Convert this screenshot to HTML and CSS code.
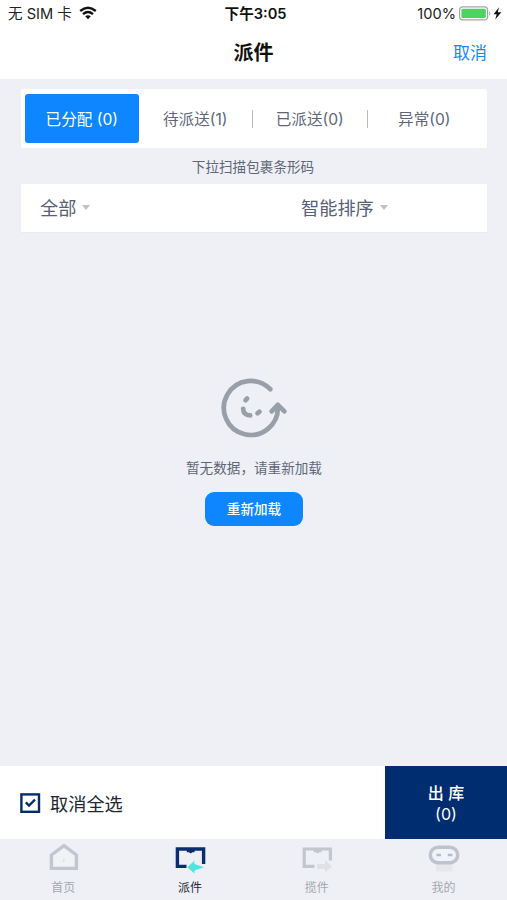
FILE: index.html
```
<!DOCTYPE html>
<html lang="zh-CN">
<head>
    <meta charset="UTF-8">
    <meta name="viewport" content="width=device-width, initial-scale=1.0">
    <title>派件</title>
    <link rel="stylesheet" href="styles.css">
</head>
<body>
<div class="page">
    <div class="status">
        <div class="status-left">
            <span>无 SIM 卡</span>
            <svg class="wifi" width="18" height="14" viewBox="0 0 18 14">
                <path d="M1.2 5Q9 -1.6 16.8 5M4 8.2Q9 4 14 8.2" fill="none" stroke="#111" stroke-width="2.4"/>
                <path d="M6.2 10.3Q9 8 11.8 10.3L9 13.2Z" fill="#111"/>
            </svg>
        </div>
        <div class="status-time">下午3:05</div>
        <div class="status-right">
            <span>100%</span>
            <svg width="44" height="16" viewBox="0 0 44 16">
                <rect x="0.6" y="0.9" width="28" height="13" rx="3.2" fill="#fff" stroke="#a6a6a6" stroke-width="1.2"/>
                <rect x="2.4" y="2.7" width="24.4" height="9.4" rx="1.4" fill="#4cd45f"/>
                <path d="M30.2 5.1Q32.6 7.5 30.2 9.9Z" fill="#a6a6a6"/>
                <path d="M40 1.2L34.6 8.2H37.7L36.2 13.6L42.4 6.2H38.8Z" fill="#111"/>
            </svg>
        </div>
    </div>
    <div class="header">
        <h1>派件</h1>
        <a class="cancel">取消</a>
    </div>

    <div class="main">
        <div class="tabs">
            <div class="tab active">已分配 (0)</div>
            <div class="tab">待派送(1)</div>
            <div class="tab line">已派送(0)</div>
            <div class="tab line">异常(0)</div>
        </div>
        <p class="hint">下拉扫描包裹条形码</p>
        <div class="filter">
            <div class="filter-item all">全部<i class="arrow"></i></div>
            <div class="filter-item sort">智能排序<i class="arrow"></i></div>
        </div>

        <div class="empty">
            <svg width="68" height="62" viewBox="0 0 68 62" fill="none" stroke="#989fa8" stroke-width="4.7" stroke-linecap="round" stroke-linejoin="round">
                <path d="M50.3 12.2A27 27 0 1 0 57.8 29.4"/>
                <path d="M51.6 34.4L57.8 27.8L64.4 34.4"/>
                <path d="M25.6 23.2L27 21.6M23.2 31.8Q23.4 38.4 30.2 38.4M37.6 36.2L39.4 34.7"/>
            </svg>
            <p>暂无数据，请重新加载</p>
            <div class="reload">重新加载</div>
        </div>
    </div>

    <div class="action">
        <div class="select">
            <svg width="21" height="20" viewBox="0 0 21 20" fill="none" stroke="#032d6d">
                <rect x="1.4" y="1.4" width="17.6" height="17.4" stroke-width="2.4"/>
                <path d="M5.8 9.4L9 12.6L15 6.6" stroke-width="2.3"/>
            </svg>
            <span>取消全选</span>
        </div>
        <div class="out">
            <span>出 库</span>
            <span class="count">(0)</span>
        </div>
    </div>

    <div class="nav">
        <div class="nav-item">
            <svg width="32" height="32" viewBox="0 0 32 32">
                <path d="M4.4 13L17 3.6L29.4 13V26.4H4.4Z" fill="#f1f2f6" stroke="#c3c6ce" stroke-width="3.4"/>
                <path d="M16.8 17V20" stroke="#d5d8de"/>
            </svg>
            <span>首页</span>
        </div>
        <div class="nav-item on">
            <svg width="32" height="32" viewBox="0 0 32 32">
                <path d="M12.5 24.4H3.4V7H29.6V22" fill="none" stroke="#0a2d70" stroke-width="3.4"/>
                <path d="M12.8 7H20.6V10.2H18.4L16.7 11.6L15 10.2H12.8Z" fill="#0a2d70"/>
                <path d="M13.4 25.2L20.4 18.8V22L30 25.2L20.4 28.4V31.6Z" fill="#4fe3e3"/>
            </svg>
            <span>派件</span>
        </div>
        <div class="nav-item">
            <svg width="32" height="32" viewBox="0 0 32 32">
                <path d="M13.4 24.4H3.2V7H29.4V18.4" fill="none" stroke="#c3c6ce" stroke-width="3.2"/>
                <path d="M12.8 7H20.6V10.2H18.4L16.7 11.6L15 10.2H12.8Z" fill="#c3c6ce"/>
                <path d="M16 22H24V18L31 24.5L24 30.6V27H16Z" fill="#dfe1e6"/>
            </svg>
            <span>揽件</span>
        </div>
        <div class="nav-item">
            <svg width="32" height="32" viewBox="0 0 32 32">
                <path d="M8 22H24.5V29.6H8Z" fill="#e5e7eb"/>
                <rect x="2.3" y="5.2" width="27.4" height="15.6" rx="7.8" fill="#f1f3fa" stroke="#bfc3cd" stroke-width="3.4"/>
                <path d="M8.4 13H13M19.8 13H24.4" stroke="#b7bbc7" stroke-width="2.6"/>
            </svg>
            <span>我的</span>
        </div>
    </div>
</div>
</body>
</html>
```
FILE: styles.css
```
html, body, h1, p {
    padding: 0;
    margin: 0;
}

* {
    box-sizing: border-box;
}

body {
    font-family: Inter, "Noto Sans CJK SC", sans-serif;
    color: #5e6678;
    background: #eef0f5;
}

.page {
    display: flex;
    flex-direction: column;
    height: 900px;
}

.status {
    display: grid;
    grid-template-columns: 1fr auto 1fr;
    align-items: center;
    height: 28px;
    padding: 0 4px 0 8px;
    background: #fff;
    color: #222;
    font-size: 14.6px;
    line-height: 20px;
}

.status-left, .status-right {
    display: flex;
    align-items: center;
}

.status-left span, .status-time, .status-right span {
    padding-bottom: 1px;
}

.wifi {
    margin: 0 0 2px 7px;
}

.status-time {
    color: #111;
    font-weight: 600;
}

.status-right {
    justify-content: flex-end;
    gap: 3px;
}

.header {
    display: grid;
    grid-template-columns: 1fr auto 1fr;
    align-items: center;
    height: 51px;
    padding: 0 20px 3px;
    background: #fff;
}

.header h1 {
    grid-column: 2;
    padding-top: 2px;
    color: #111;
    font-size: 20px;
    line-height: 46px;
    font-weight: 700;
}

.cancel {
    justify-self: end;
    padding-top: 2px;
    color: #1687f5;
    font-size: 17px;
    line-height: 24px;
}

.main {
    flex: 1;
    padding: 10px 20px 0 21px;
}

.tabs {
    display: flex;
    align-items: center;
    height: 59px;
    padding: 0 6px 0 4px;
    border-radius: 2px;
    background: #fff;
    font-size: 15.6px;
}

.tab {
    display: flex;
    flex: 1;
    align-items: center;
    justify-content: center;
    height: 18px;
    padding-bottom: 2px;
}

.tab.line {
    border-left: 1px solid #b5b9c1;
}

.tab.active {
    height: 49px;
    border-radius: 3px;
    background: #0d86ff;
    color: #fff;
}

.hint {
    height: 36px;
    padding-right: 2px;
    line-height: 39px;
    text-align: center;
    font-size: 13.6px;
}

.filter {
    display: flex;
    align-items: center;
    height: 49px;
    padding-bottom: 2px;
    background: #fff;
    border-bottom: 1px solid #e9ebf0;
    font-size: 18.2px;
}

.filter-item {
    display: flex;
    width: 50%;
    align-items: center;
    color: #55607a;
}

.all {
    padding-left: 19px;
}

.sort {
    padding-left: 47px;
}

.arrow {
    margin-left: 6px;
    border: 4.5px solid transparent;
    border-top: 5px solid #bfc1c5;
    border-bottom: 0;
}

.empty {
    display: flex;
    flex-direction: column;
    align-items: center;
    padding-top: 144px;
}

.empty p {
    margin-top: 19px;
    font-size: 13.6px;
    line-height: 20px;
}

.reload {
    width: 98px;
    height: 34px;
    margin-top: 14px;
    border-radius: 9px;
    background: #0d86ff;
    color: #fff;
    font-size: 13.6px;
    font-weight: 500;
    line-height: 35px;
    text-align: center;
}

.action {
    display: flex;
    height: 73px;
    background: #fff;
}

.select {
    display: flex;
    flex: 1;
    align-items: center;
    gap: 9px;
    padding-left: 20px;
    color: #222730;
    font-size: 18.2px;
}

.out {
    display: flex;
    flex-direction: column;
    justify-content: center;
    width: 122px;
    background: #002c70;
    color: #fff;
    font-size: 16px;
    font-weight: 500;
    line-height: 22px;
    text-align: center;
}

.out .count {
    font-weight: 400;
    line-height: 20px;
}

.nav {
    display: flex;
    height: 61px;
}

.nav-item {
    display: flex;
    flex: 1;
    flex-direction: column;
    align-items: center;
    padding-top: 3px;
    color: #a5a8ae;
    font-size: 12px;
    line-height: 24px;
}

.nav-item svg {
    flex-shrink: 0;
    margin-bottom: 2px;
}

.nav-item.on {
    color: #252a35;
}
```
